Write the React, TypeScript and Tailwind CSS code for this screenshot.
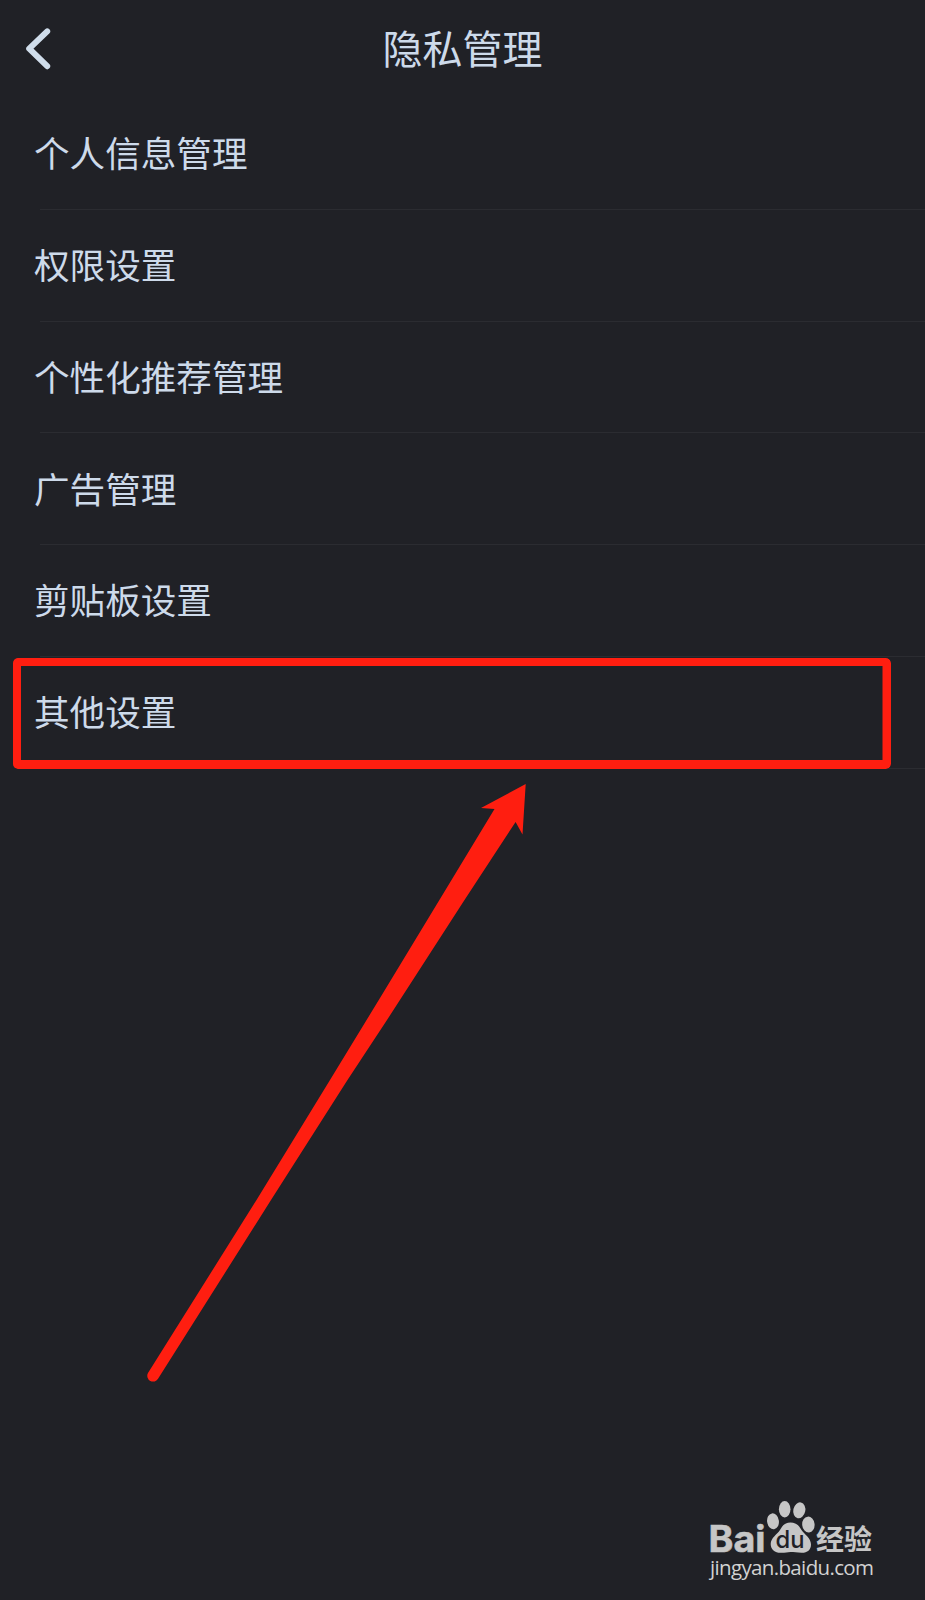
const items = [
  '个人信息管理',
  '权限设置',
  '个性化推荐管理',
  '广告管理',
  '剪贴板设置',
  '其他设置',
];

function Header() {
  return (
    <header className="flex h-[98px] items-center">
      <button aria-label="返回" className="flex w-20 shrink-0 items-center pl-[22px]">
        <svg width="32" height="48" viewBox="0 0 32 48" fill="none">
          <path d="M25.2 6.4L7.2 23.6L25.2 41.2" stroke="#d0ddeb" strokeWidth="6" strokeLinecap="round" strokeLinejoin="round" />
        </svg>
      </button>
      <h1 className="flex-1 pb-1 text-center text-[40px] leading-[60px]">隐私管理</h1>
      <div className="w-20 shrink-0" />
    </header>
  );
}

function Row({ label }: { label: string }) {
  return (
    <li className="flex h-[111.8px] flex-col">
      <div className="flex flex-1 items-center pb-[2.4px] pl-[34px] text-[35.6px] leading-[52px]">{label}</div>
      <div className="ml-10 h-px shrink-0 bg-[#2b2c31]" />
    </li>
  );
}

function Arrow() {
  return (
    <svg className="absolute top-[780px] left-[140px]" width="395" height="610" viewBox="140 780 395 610">
      <path
        d="M525.7 784L481 808L494.5 809L440 899L380 998L330 1080L256.5 1200L148 1373A5.8 5.8 0 0 0 158.2 1378.6L271 1200L347.5 1080L387 1020L464.5 900L515.6 822L522.5 834.5Z"
        fill="#ff1e10"
      />
    </svg>
  );
}

function Watermark() {
  return (
    <div className="absolute top-[1498px] left-[710px] w-[168px] text-[#c6c6c6]">
      <svg className="overflow-visible" width="168" height="56" viewBox="0 0 168 56" fill="currentColor">
        <text x="-1.5" y="53.5" fontFamily="Inter, sans-serif" fontWeight="700" fontSize="37" textLength="57" lengthAdjust="spacingAndGlyphs" stroke="currentColor" strokeWidth="0.6">Bai</text>
        <ellipse cx="63" cy="23.3" rx="5.9" ry="8" transform="rotate(-8 63 23.3)" />
        <ellipse cx="74.7" cy="11.2" rx="5.8" ry="8.2" />
        <ellipse cx="89.3" cy="12.3" rx="6" ry="8" transform="rotate(12 89.3 12.3)" />
        <ellipse cx="98.4" cy="26.6" rx="6.2" ry="8" transform="rotate(-5 98.4 26.6)" />
        <path d="M80.5 24.5C86 24.5 89 27.5 91.5 32C94 36 101 40 101 46.5C101 52 97 55 91.5 54.8C87 54.6 84 54 80.5 54C77 54 75 55 70.5 54.8C65 54.8 60.7 51.5 60.7 46C60.7 40 67 36.5 70 32C72.5 27.5 75 24.5 80.5 24.5Z" />
        <text x="65.5" y="50" fill="#202126" fontFamily="Inter, sans-serif" fontWeight="500" fontSize="24" textLength="29" lengthAdjust="spacingAndGlyphs">du</text>
        <text x="106" y="51.5" fontFamily="Noto Sans CJK SC, sans-serif" fontWeight="700" fontSize="28" textLength="56" lengthAdjust="spacingAndGlyphs">经验</text>
      </svg>
      <p className="font-['Open_Sans',sans-serif] text-[20.5px] leading-[26px] font-medium tracking-[-0.65px] whitespace-nowrap text-[#d2d2d2]">jingyan.baidu.com</p>
    </div>
  );
}

export default function App() {
  return (
    <main className="relative h-[1600px] w-[925px] overflow-hidden bg-[#202126] font-['Noto_Sans_CJK_SC',sans-serif] text-[#cddaea]">
      <Header />
      <ul>
        {items.map((label) => (
          <Row key={label} label={label} />
        ))}
      </ul>
      <div className="absolute top-[658px] left-[12.5px] h-[111px] w-[878.5px] rounded-[5px] bg-[#ff1e10] [clip-path:path(evenodd,'M5_0H873.5A5_5_0_0_1_878.5_5V106A5_5_0_0_1_873.5_111H5A5_5_0_0_1_0_106V5A5_5_0_0_1_5_0ZM8.5_8H870V102H8.5Z')]" />
      <Arrow />
      <Watermark />
    </main>
  );
}
